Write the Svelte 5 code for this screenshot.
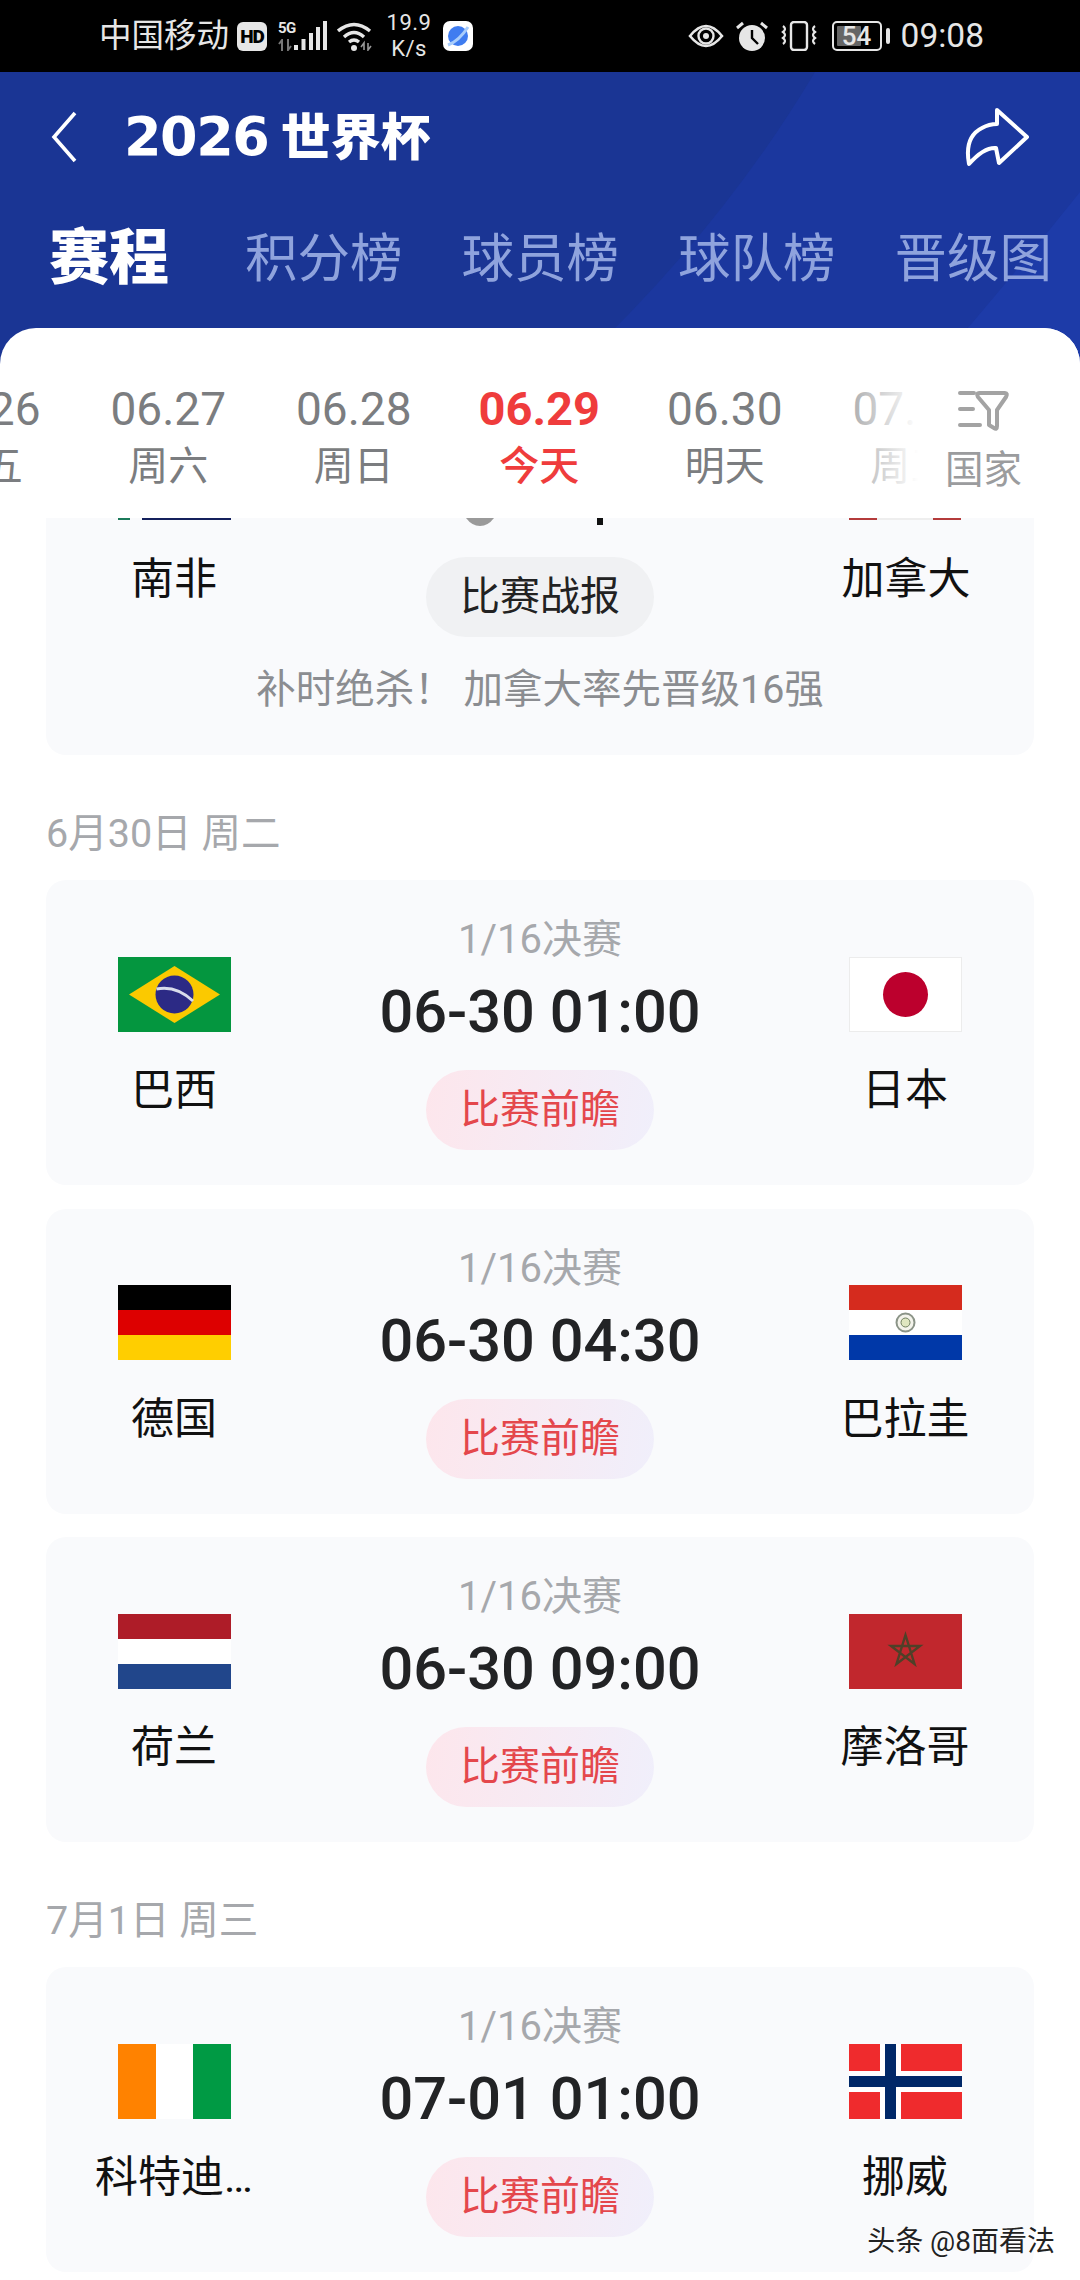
<script>
  const dates = [
    { d: '06.26', s: '周五' },
    { d: '06.27', s: '周六' },
    { d: '06.28', s: '周日' },
    { d: '06.29', s: '今天', today: true },
    { d: '06.30', s: '明天' },
    { d: '07.01', s: '周三' }
  ];
  const tabs = ['积分榜', '球员榜', '球队榜', '晋级图'];
  const groups = [
    {
      label: '6月30日 周二',
      games: [
        { a: '巴西', fa: 'br', b: '日本', fb: 'jp', t: '06-30 01:00' },
        { a: '德国', fa: 'de', b: '巴拉圭', fb: 'py', t: '06-30 04:30' },
        { a: '荷兰', fa: 'nl', b: '摩洛哥', fb: 'ma', t: '06-30 09:00' }
      ]
    },
    {
      label: '7月1日 周三',
      games: [{ a: '科特迪…', fa: 'ci', b: '挪威', fb: 'no', t: '07-01 01:00' }]
    }
  ];
</script>

{#snippet flag(k)}
  <svg class="flag" viewBox="0 0 113 75" aria-hidden="true">
    {#if k === 'br'}
      <rect width="113" height="75" fill="#04963f" />
      <path d="M56.5 9 L102 37.5 L56.5 66 L11 37.5 Z" fill="#fbc900" />
      <circle cx="56.5" cy="37.5" r="19" fill="#2c2a85" />
      <path d="M38.5 32 Q58 28 75 44" fill="none" stroke="#d8dcec" stroke-width="3" />
    {:else if k === 'jp'}
      <rect x="0.5" y="0.5" width="112" height="74" fill="#fff" stroke="#ececec" />
      <circle cx="56.5" cy="37.5" r="22.5" fill="#bc002d" />
    {:else if k === 'de'}
      <rect width="113" height="25" fill="#000" />
      <rect y="25" width="113" height="25" fill="#dd0000" />
      <rect y="50" width="113" height="25" fill="#ffce00" />
    {:else if k === 'py'}
      <rect width="113" height="25" fill="#d52b1e" />
      <rect y="25" width="113" height="25" fill="#fff" />
      <rect y="50" width="113" height="25" fill="#0038a8" />
      <circle cx="56.5" cy="37.5" r="9" fill="#f4f4ec" stroke="#8b9488" stroke-width="2" />
      <circle cx="56.5" cy="37.5" r="4.5" fill="#dfe6c0" stroke="#6f7f5f" stroke-width="1" />
    {:else if k === 'nl'}
      <rect width="113" height="25" fill="#ae1c28" />
      <rect y="25" width="113" height="25" fill="#fff" />
      <rect y="50" width="113" height="25" fill="#21468b" />
    {:else if k === 'ma'}
      <rect width="113" height="75" fill="#c1272d" />
      <path d="M56.5 21 L65.5 50 L42 32 L71 32 L47.5 50 Z" fill="none" stroke="#4f4028" stroke-width="2.4" />
    {:else if k === 'ci'}
      <rect width="38" height="75" fill="#ff8200" />
      <rect x="38" width="38" height="75" fill="#fff" />
      <rect x="75" width="38" height="75" fill="#009a44" />
    {:else if k === 'no'}
      <rect width="113" height="75" fill="#ef2b2d" />
      <rect x="31" width="21" height="75" fill="#fff" />
      <rect y="27" width="113" height="21" fill="#fff" />
      <rect x="36" width="11" height="75" fill="#002868" />
      <rect y="32" width="113" height="11" fill="#002868" />
    {/if}
  </svg>
{/snippet}

<div class="page">
  <div class="status">
    <div class="st-left">
      <span class="carrier">中国移动</span>
      <span class="hd">HD</span>
      <span class="sig">
        <span class="fiveg">5G</span>
        <svg class="updown" width="15" height="12" viewBox="0 0 15 12" aria-hidden="true">
          <path d="M4 12 V1 L1 5 M10 0 V11 L13 7" fill="none" stroke="#777" stroke-width="2" />
        </svg>
        <svg width="33" height="30" viewBox="0 0 33 30" aria-hidden="true">
          <path d="M0 24h4v5H0zM7.500 18h4v11h-4zM15 12h4v17h-4zM22 6h4v23h-4zM29 0h4v29h-4z" fill="#e6e6e6" />
        </svg>
      </span>
      <svg class="wifi" width="37" height="30" viewBox="0 0 37 30" aria-hidden="true">
        <path d="M1 10 Q17 -3 33 10 M7 16 Q17 7 27 16 M12 21 Q17 17 22 21" fill="none" stroke="#e6e6e6" stroke-width="3.4" />
        <circle cx="17" cy="27" r="3" fill="#e6e6e6" />
        <path d="M27 29 L27 22 L24 26 M31 22 L31 29 L34 25" fill="none" stroke="#999" stroke-width="1.6" />
      </svg>
      <span class="speed"><span>19.9</span><span>K/s</span></span>
      <svg class="appicon" width="30" height="30" viewBox="0 0 30 30" aria-hidden="true">
        <rect width="30" height="30" rx="7" fill="#fff" />
        <circle cx="15" cy="15" r="10" fill="#3f7cf0" />
        <path d="M5 24 Q16 20 25 6" fill="none" stroke="#a9cdfb" stroke-width="3" />
      </svg>
    </div>
    <div class="st-right">
      <svg width="36" height="28" viewBox="0 0 36 28" aria-hidden="true">
        <path d="M2 14 Q18 -6 34 14 Q18 34 2 14 Z" fill="none" stroke="#e6e6e6" stroke-width="2.6" />
        <circle cx="18" cy="14" r="7.500" fill="none" stroke="#e6e6e6" stroke-width="2.4" />
        <circle cx="18" cy="14" r="3" fill="#e6e6e6" />
      </svg>
      <svg width="32" height="30" viewBox="0 0 32 30" aria-hidden="true">
        <circle cx="16" cy="17" r="13" fill="#e6e6e6" />
        <path d="M16 9 V17 L22 23" fill="none" stroke="#000" stroke-width="2.4" />
        <path d="M1 7 L7 2 M31 7 L25 2" stroke="#e6e6e6" stroke-width="3" />
      </svg>
      <svg width="38" height="30" viewBox="0 0 38 30" aria-hidden="true">
        <rect x="11" y="1" width="16" height="28" rx="3" fill="none" stroke="#e6e6e6" stroke-width="2.4" />
        <path d="M3 5 Q7 8 3 11 Q7 14 3 17 Q7 20 3 23 M35 5 Q31 8 35 11 Q31 14 35 17 Q31 20 35 23" fill="none" stroke="#e6e6e6" stroke-width="2.2" />
      </svg>
      <span class="batt"><span class="fill"></span><span class="pct">54</span></span>
      <span class="nub"></span>
      <span class="clock">09:08</span>
    </div>
  </div>

  <div class="main">
    <svg class="swoosh" viewBox="0 0 1080 300" preserveAspectRatio="none" aria-hidden="true">
      <path d="M815 0 Q720 160 570 300 L1080 300 L1080 0 Z" fill="#1b379e" />
      <path d="M1080 120 Q1000 220 930 300 L1080 300 Z" fill="#1d3ba8" />
    </svg>

    <header class="head">
      <div class="topbar">
        <div class="title-wrap">
          <svg class="back" width="30" height="54" viewBox="0 0 30 54" aria-hidden="true">
            <path d="M26 3 L5 27 L26 51" fill="none" stroke="#fff" stroke-width="3.6" />
          </svg>
          <h1><span class="y">2026</span> 世界杯</h1>
        </div>
        <svg class="share" width="66" height="60" viewBox="0 0 66 60" aria-hidden="true">
          <path d="M33 3 L63 30 L35 56 L32 41 Q20 40 5 57 Q0 30 18 21 Q25 17 33 17 Z" fill="none" stroke="#fff" stroke-width="4" stroke-linejoin="round" />
        </svg>
      </div>
      <nav class="tabs">
        <span class="tab on">赛程</span>
        {#each tabs as t}
          <span class="tab">{t}</span>
        {/each}
      </nav>
    </header>

    <section class="panel">
      <div class="dates">
        <div class="date-row">
          {#each dates as x}
            <div class="date" class:today={x.today}>
              <span class="dn">{x.d}</span>
              <span class="ds">{x.s}</span>
            </div>
          {/each}
        </div>
        <div class="filter">
          <svg width="52" height="42" viewBox="0 0 52 42" aria-hidden="true">
            <path d="M2 3h14M2 19h13M2 35h20" stroke="#a3a3a3" stroke-width="4" stroke-linecap="round" />
            <path d="M21 3 H47 Q50 3 48 7 L39 20 V36 Q39 40 36 38 L31 35 V20 L20 7 Q18 3 21 3 Z" fill="none" stroke="#a3a3a3" stroke-width="4" stroke-linejoin="round" />
          </svg>
          <span>国家</span>
        </div>
      </div>

      <div class="list">
        <div class="card first">
          <svg class="cut" width="988" height="8" viewBox="0 0 988 8" aria-hidden="true">
            <rect x="72" width="12" height="2" fill="#1b7a5a" />
            <rect x="96" width="89" height="2" fill="#14205c" />
            <path d="M420 0 H448 Q442 8 434 8 Q426 8 420 0 Z" fill="#9a9a9a" />
            <rect x="551" width="6" height="7" fill="#111" />
            <rect x="803" width="28" height="2" fill="#b43b3b" />
            <rect x="831" width="56" height="2" fill="#eee" />
            <rect x="887" width="28" height="2" fill="#b43b3b" />
          </svg>
          <div class="first-body">
            <span class="team-name">南非</span>
            <span class="pill grey">比赛战报</span>
            <span class="team-name">加拿大</span>
          </div>
          <p class="note">补时绝杀！ 加拿大率先晋级16强</p>
        </div>

        {#each groups as g}
          <h2 class="day">{g.label}</h2>
          <div class="games">
            {#each g.games as m}
              <article class="card game">
                <div class="team">
                  {@render flag(m.fa)}
                  <span class="team-name">{m.a}</span>
                </div>
                <div class="mid">
                  <span class="round">1/16决赛</span>
                  <span class="time">{m.t}</span>
                  <span class="pill pink">比赛前瞻</span>
                </div>
                <div class="team">
                  {@render flag(m.fb)}
                  <span class="team-name">{m.b}</span>
                </div>
              </article>
            {/each}
          </div>
        {/each}
      </div>
    </section>
  </div>

  <div class="mark">头条 @8面看法</div>
</div>

<style>
  :global(body) {
    margin: 0;
    background: #000;
  }
  .page {
    position: relative;
    width: 1080px;
    height: 2280px;
    overflow: hidden;
    display: flex;
    flex-direction: column;
    font-family: Roboto, 'Noto Sans CJK SC', sans-serif;
    background: #000;
  }
  .status {
    height: 72px;
    flex: none;
    display: flex;
    justify-content: space-between;
    align-items: center;
    padding: 0 96px 0 99px;
    color: #e6e6e6;
  }
  .st-left,
  .st-right {
    display: flex;
    align-items: center;
  }
  .carrier {
    font-size: 32.5px;
    line-height: 40px;
    width: 138px;
  }
  .hd {
    width: 30px;
    height: 29px;
    border-radius: 6px;
    background: #e6e6e6;
    color: #000;
    font-size: 19px;
    font-weight: 900;
    line-height: 29px;
    text-align: center;
    letter-spacing: -1px;
  }
  .sig {
    position: relative;
    display: flex;
    align-items: flex-end;
    height: 30px;
    width: 49px;
    margin-left: 11px;
    justify-content: flex-end;
  }
  .fiveg {
    position: absolute;
    left: 0;
    top: 0;
    font-size: 15px;
    line-height: 14px;
    font-weight: 700;
    letter-spacing: -0.5px;
  }
  .updown {
    position: absolute;
    left: 0;
    bottom: 0;
  }
  .wifi {
    margin-left: 10px;
  }
  .speed {
    display: flex;
    flex-direction: column;
    align-items: center;
    width: 46px;
    margin-left: 12px;
    font-size: 22px;
    line-height: 26px;
    letter-spacing: 0.5px;
  }
  .appicon {
    margin-left: 11px;
  }
  .st-right svg + svg {
    margin-left: 12px;
  }
  .batt {
    position: relative;
    width: 50px;
    height: 30px;
    box-sizing: border-box;
    border: 2.5px solid #e6e6e6;
    border-radius: 5px;
    margin-left: 14px;
    display: flex;
    align-items: center;
    justify-content: center;
  }
  .fill {
    position: absolute;
    left: 3px;
    top: 3px;
    bottom: 3px;
    width: 24px;
    background: #666;
    border-radius: 1px;
  }
  .pct {
    position: relative;
    font-size: 26px;
    line-height: 24px;
    font-weight: 500;
  }
  .nub {
    width: 4px;
    height: 16px;
    background: #e6e6e6;
    border-radius: 2px;
    margin-left: 4px;
  }
  .clock {
    font-size: 33.5px;
    line-height: 40px;
    margin-left: 11px;
  }
  .main {
    position: relative;
    flex: 1;
    min-height: 0;
    display: flex;
    flex-direction: column;
    background: #1a3594;
  }
  .swoosh {
    position: absolute;
    left: 0;
    top: 0;
    width: 1080px;
    height: 300px;
  }
  .head {
    position: relative;
    height: 256px;
    flex: none;
    box-sizing: border-box;
    padding: 35px 50px 0 49px;
    color: #fff;
  }
  .topbar {
    display: flex;
    justify-content: space-between;
    align-items: center;
    height: 60px;
  }
  .title-wrap {
    display: flex;
    align-items: center;
  }
  .back {
    flex: none;
  }
  h1 {
    margin: 0 0 0 45px;
    font-size: 50px;
    line-height: 60px;
    font-weight: 900;
    white-space: nowrap;
  }
  .y {
    font-family: 'DejaVu Sans', sans-serif;
    font-size: 54px;
    font-weight: 700;
    letter-spacing: -1.5px;
  }
  .tabs {
    display: flex;
    align-items: center;
    margin-top: 57px;
    height: 70px;
    white-space: nowrap;
  }
  .tab {
    font-size: 52.5px;
    line-height: 70px;
    color: #8fa3dd;
    margin-right: 59px;
    font-weight: 400;
  }
  .tab.on {
    font-size: 60px;
    font-weight: 900;
    color: #fff;
    margin-right: 76px;
  }
  .panel {
    position: relative;
    flex: 1;
    min-height: 0;
    background: #fff;
    border-radius: 36px 36px 0 0;
    overflow: hidden;
  }
  .dates {
    position: relative;
    height: 190px;
    overflow: hidden;
  }
  .date-row {
    display: flex;
    margin-left: -110px;
    padding-top: 59px;
  }
  .date {
    flex: none;
    width: 185.5px;
    display: flex;
    flex-direction: column;
    align-items: center;
    color: #7b7d80;
  }
  .dn {
    font-size: 46px;
    line-height: 44px;
  }
  .ds {
    font-size: 40px;
    line-height: 40px;
    margin-top: 16px;
  }
  .today {
    color: #ef3c3c;
  }
  .today .dn {
    font-size: 47px;
    font-weight: 700;
  }
  .today .ds {
    font-weight: 500;
  }
  .filter {
    position: absolute;
    right: 0;
    top: 0;
    bottom: 0;
    width: 270px;
    box-sizing: border-box;
    padding: 62px 58px 0 0;
    display: flex;
    flex-direction: column;
    align-items: flex-end;
    background: linear-gradient(90deg, rgba(255, 255, 255, 0), #fff 40%);
    color: #9b9c9e;
    font-size: 38.5px;
    line-height: 40px;
  }
  .filter svg {
    margin-right: 12px;
  }
  .filter span {
    margin-top: 18px;
  }
  .list {
    padding: 0 46px;
  }
  .card {
    background: #f9fafc;
    border-radius: 20px;
  }
  .first {
    height: 237px;
    border-radius: 0 0 20px 20px;
    position: relative;
    display: flex;
    flex-direction: column;
    align-items: center;
  }
  .cut {
    display: block;
    flex: none;
  }
  .first-body {
    width: 100%;
    display: grid;
    grid-template-columns: 256px 1fr 256px;
    justify-items: center;
    align-items: start;
    padding-top: 31px;
  }
  .first-body .team-name {
    margin: 2px 0 0;
  }
  .note {
    margin: 33px 0 0;
    font-size: 39.5px;
    line-height: 40px;
    color: #8b8d91;
  }
  .day {
    margin: 59px 0 26px;
    font-size: 39.5px;
    line-height: 40px;
    font-weight: 400;
    color: #a6a8ac;
  }
  .games {
    display: flex;
    flex-direction: column;
    gap: 23.5px;
  }
  .game {
    height: 305px;
    display: grid;
    grid-template-columns: 256px 1fr 258px;
  }
  .team {
    display: flex;
    flex-direction: column;
    align-items: center;
    padding-top: 76.5px;
  }
  .flag {
    display: block;
    width: 113px;
    height: 75px;
  }
  .team-name {
    margin-top: 38.5px;
    font-size: 43px;
    line-height: 40px;
    color: #111;
    white-space: nowrap;
  }
  .mid {
    display: flex;
    flex-direction: column;
    align-items: center;
    padding-top: 40px;
    margin-right: -2px;
  }
  .round {
    font-size: 40px;
    line-height: 40px;
    color: #a6a8ac;
  }
  .time {
    margin-top: 22px;
    font-size: 59.5px;
    line-height: 60px;
    font-weight: 500;
    color: #222325;
    white-space: nowrap;
  }
  .pill {
    box-sizing: border-box;
    width: 228px;
    height: 80px;
    border-radius: 40px;
    font-size: 40px;
    line-height: 80px;
    text-align: center;
  }
  .mid .pill {
    margin-top: 28px;
  }
  .pink {
    background: linear-gradient(100deg, #fde6ec, #f0effb);
    color: #e4474c;
  }
  .grey {
    background: #f0f1f3;
    color: #222;
  }
  .mark {
    position: absolute;
    right: 25px;
    top: 2224px;
    font-size: 28px;
    line-height: 36px;
    color: #222;
    white-space: nowrap;
    text-shadow: 0 0 2px #fff, 0 0 2px #fff;
  }
</style>
